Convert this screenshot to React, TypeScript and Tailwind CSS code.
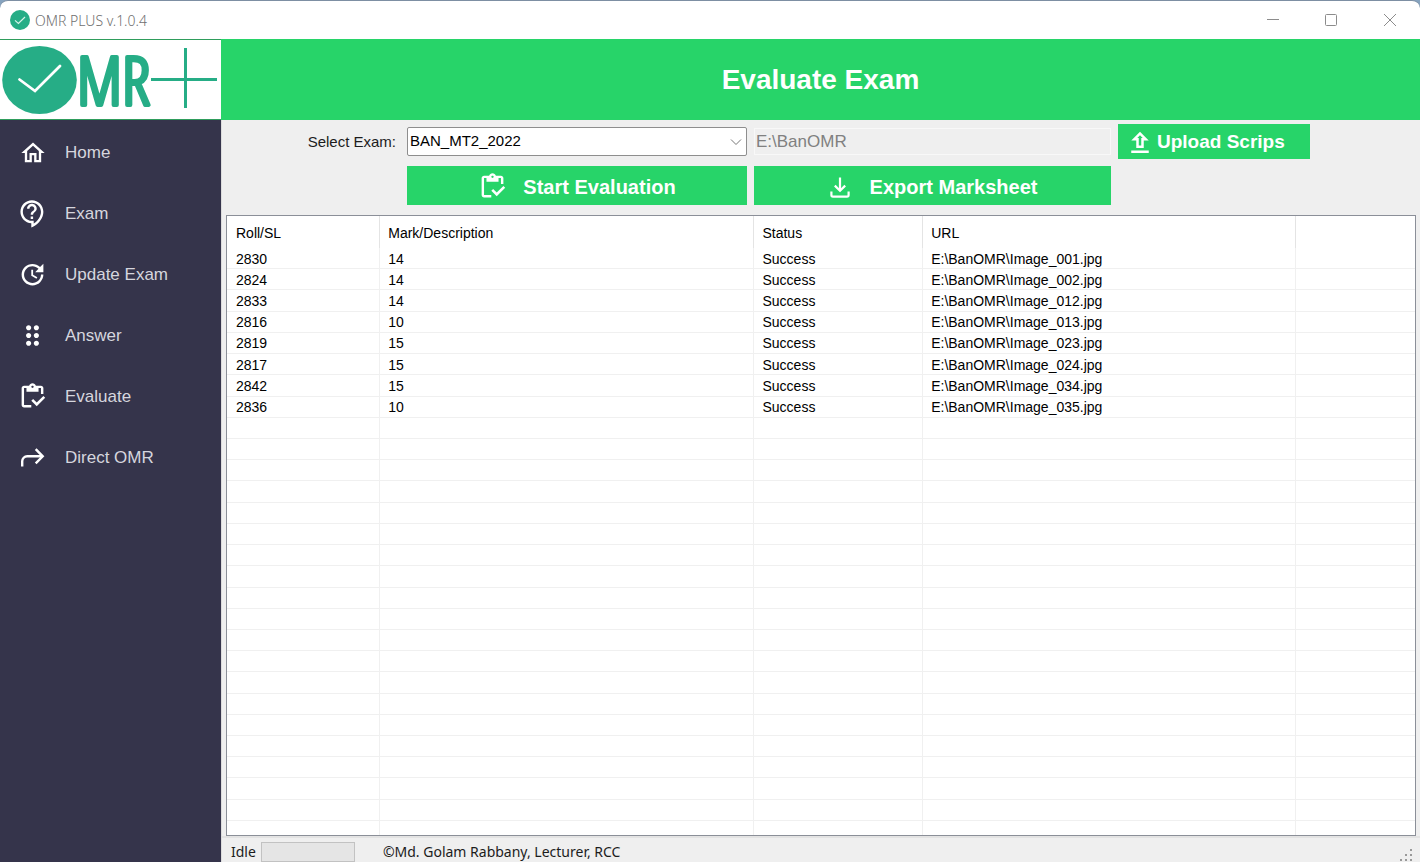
import type { ReactNode } from "react";
import {
  MdDragIndicator,
  MdOutlineContactSupport,
  MdOutlineHome,
  MdOutlineInventory,
  MdOutlineUpload,
  MdUpdate,
} from "react-icons/md";

function RedoArrow() {
  return (
    <svg viewBox="0 0 26 26" className="size-[26px]" fill="none" stroke="currentColor" strokeWidth="2.4" aria-hidden="true">
      <path d="M2.2 21.500v-5.2a5 5 0 0 1 5-5H22.500" />
      <path d="M15.700 4.2l7 7.1-7 7.1" />
    </svg>
  );
}

function TrayDown() {
  return (
    <svg viewBox="0 0 24 24" className="size-6" fill="none" stroke="currentColor" strokeWidth="2.2" aria-hidden="true">
      <path d="M12 2.5v13" />
      <path d="M6.8 10.6l5.2 5.2 5.2-5.2" />
      <path d="M3.4 16.5v3.6a1.6 1.6 0 0 0 1.6 1.6h14a1.6 1.6 0 0 0 1.6-1.6v-3.6" />
    </svg>
  );
}

const nav: { label: string; icon: ReactNode }[] = [
  { label: "Home", icon: <MdOutlineHome size={28} /> },
  { label: "Exam", icon: <MdOutlineContactSupport size={29} /> },
  { label: "Update Exam", icon: <MdUpdate size={29} /> },
  { label: "Answer", icon: <MdDragIndicator size={31} /> },
  { label: "Evaluate", icon: <MdOutlineInventory size={29} /> },
  { label: "Direct OMR", icon: <RedoArrow /> },
];

const rows: [string, string, string][] = [
  ["2830", "14", "001"],
  ["2824", "14", "002"],
  ["2833", "14", "012"],
  ["2816", "10", "013"],
  ["2819", "15", "023"],
  ["2817", "15", "024"],
  ["2842", "15", "034"],
  ["2836", "10", "035"],
];

const emptyRows = Array.from({ length: 19 }, (_, i) => i);

function TitleBar() {
  return (
    <header className="flex h-[39px] shrink-0 items-center rounded-t-lg border-t border-[#7d8fa3] bg-white pl-[10px] text-[#8c8c8c]">
      <svg viewBox="0 0 20 20" className="size-5" aria-hidden="true">
        <circle cx="10" cy="10" r="10" fill="#26ad86" />
        <path d="M5 10.4l3.4 3L15 7" fill="none" stroke="#d8f3ea" strokeWidth="1.2" />
      </svg>
      <span className="ml-[5px] font-['Noto_Sans',sans-serif] text-[14px] font-light text-[#707070]">OMR PLUS v.1.0.4</span>
      <div className="ml-auto flex h-full">
        <button aria-label="Minimize" className="grid w-[58px] place-items-center">
          <svg viewBox="0 0 12 12" className="size-3" stroke="currentColor" fill="none"><path d="M0 5.5h12" /></svg>
        </button>
        <button aria-label="Maximize" className="grid w-[58px] place-items-center">
          <svg viewBox="0 0 12 12" className="size-3" stroke="currentColor" fill="none"><rect x=".5" y=".5" width="11" height="11" rx="1" /></svg>
        </button>
        <button aria-label="Close" className="grid w-[60px] place-items-center">
          <svg viewBox="0 0 12 12" className="size-3" stroke="currentColor" fill="none"><path d="M0 0l12 12M12 0L0 12" /></svg>
        </button>
      </div>
    </header>
  );
}

function Logo() {
  return (
    <div className="flex h-[81px] items-center border-y border-[#2f9d5c] bg-white">
      <svg viewBox="0 0 221 79" className="w-full overflow-visible" role="img" aria-label="OMR+">
        <ellipse cx="39.5" cy="40" rx="37.3" ry="34" fill="#26ad86" />
        <path d="M19.5 39.5L35 51 60 26" fill="none" stroke="#fff" strokeWidth="2.8" strokeLinecap="round" />
        <text x="77" y="65" fill="#26ad86" stroke="#26ad86" strokeWidth="4" strokeLinejoin="round" className="font-['Open_Sans_Condensed_Light','Noto_Sans_ExtraCondensed_Light','Open_Sans_Condensed',sans-serif] text-[66px] font-light">MR</text>
        <path d="M151 39.5h66M185.500 8v60" fill="none" stroke="#26ad86" strokeWidth="3" />
      </svg>
    </div>
  );
}

function Sidebar() {
  return (
    <aside className="w-[221px] shrink-0 bg-[#35344b]">
      <Logo />
      <nav className="pt-[2px] font-['Liberation_Sans',sans-serif] text-[17px] text-[#d6d6de]">
        {nav.map((item) => (
          <a key={item.label} href="#" className="flex h-[61px] items-center">
            <span className="grid w-[65px] place-items-center text-white">{item.icon}</span>
            {item.label}
          </a>
        ))}
      </nav>
    </aside>
  );
}

const green = "flex items-center bg-[#27d469] pt-[2px] font-bold text-white";

function Toolbar() {
  return (
    <div className="grid grid-cols-[178fr_340fr_357fr_192fr_103fr] items-center gap-[7px] pt-1 pb-[10px]">
      <label htmlFor="exam" className="pt-[2px] pr-1 text-right text-[15px] text-[#1c1c1c]">Select Exam:</label>
      <div className="relative">
        <select id="exam" className="h-[29px] w-full appearance-none rounded-xs border border-[#8e8e8e] bg-white pl-[2px] text-[15px] text-black">
          <option>BAN_MT2_2022</option>
        </select>
        <svg viewBox="0 0 12 8" className="pointer-events-none absolute top-[11px] right-[5px] h-2 w-3" fill="none" stroke="#777" aria-hidden="true">
          <path d="M1 1.500l5 5 5-5" />
        </svg>
      </div>
      <input aria-label="Scripts folder" disabled defaultValue="E:\BanOMR" className="h-[27px] w-full min-w-0 border border-[#f8f8f8] bg-[#efefef] px-px text-[17px] text-[#808080]" />
      <button className={`${green} h-[35px] gap-[2px] pl-[7px] text-[19px]`}>
        <MdOutlineUpload size={30} />
        Upload Scrips
      </button>
      <button className={`${green} col-start-2 h-[39px] justify-center gap-4 text-[20px]`}>
        <MdOutlineInventory size={29} />
        Start Evaluation
      </button>
      <button className={`${green} h-[39px] justify-center gap-[18px] text-[20px]`}>
        <TrayDown />
        Export Marksheet
      </button>
    </div>
  );
}

function Results() {
  return (
    <div className="mr-1 ml-1 min-h-0 flex-1 overflow-hidden border border-[#8b8f98] bg-white">
      <table className="h-full w-full table-fixed border-separate border-spacing-0 text-left text-[14px] leading-4 text-black [&_td]:border-r [&_td]:border-b [&_td]:border-[#f0f0f0] [&_td]:pt-px [&_td]:pb-0 [&_td]:pl-2 [&_td:first-child]:pl-[9px] [&_td:last-child]:border-r-0 [&_th]:border-r [&_th]:border-[#e4e4e4] [&_th]:pt-px [&_th]:pl-2 [&_th]:font-normal [&_th:first-child]:pl-[9px] [&_th:last-child]:border-r-0">
        <colgroup>
          <col className="w-[12.9%]" />
          <col className="w-[31.5%]" />
          <col className="w-[14.2%]" />
          <col className="w-[31.4%]" />
          <col />
        </colgroup>
        <thead>
          <tr className="h-8">
            <th>Roll/SL</th>
            <th>Mark/Description</th>
            <th>Status</th>
            <th>URL</th>
            <th aria-label="Spacer" />
          </tr>
        </thead>
        <tbody>
          {rows.map(([roll, mark, image]) => (
            <tr key={roll}>
              <td>{roll}</td>
              <td>{mark}</td>
              <td>Success</td>
              <td>{`E:\\BanOMR\\Image_${image}.jpg`}</td>
              <td />
            </tr>
          ))}
          {emptyRows.map((i) => (
            <tr key={i}>
              <td>&nbsp;</td>
              <td />
              <td />
              <td />
              <td />
            </tr>
          ))}
        </tbody>
        <tfoot>
          <tr className="h-[14px] [&>td]:border-b-0">
            <td />
            <td />
            <td />
            <td />
            <td />
          </tr>
        </tfoot>
      </table>
    </div>
  );
}

function StatusBar() {
  return (
    <footer className="flex h-[26px] shrink-0 items-center border-t-2 border-[#e3e3e3] pt-[3px] pr-[6px] pl-[9px] font-['Noto_Sans',sans-serif] text-[14px] text-[#1c1c1c]">
      <span>Idle</span>
      <div role="progressbar" aria-label="Progress" className="ml-[5px] h-5 w-[94px] border border-[#c2c2c2] bg-[#e5e5e5]" />
      <span className="ml-7">©Md. Golam Rabbany, Lecturer, RCC</span>
      <svg viewBox="0 0 14 14" className="ml-auto size-[14px] self-end" fill="#999" aria-hidden="true">
        <path d="M10 1h2v2h-2zM5 6h2v2H5zM10 6h2v2h-2zM0 11h2v2H0zM5 11h2v2H5zM10 11h2v2h-2z" />
      </svg>
    </footer>
  );
}

export default function App() {
  return (
    <div className="flex h-screen flex-col bg-[#86a3bf]">
      <TitleBar />
      <div className="flex min-h-0 flex-1 bg-[#efefef]">
        <Sidebar />
        <main className="flex min-w-0 flex-1 flex-col border-l border-[#dcdcdc] font-['Liberation_Sans',sans-serif]">
          <div className="-ml-px flex h-[81px] shrink-0 items-center justify-center bg-[#27d469]">
            <h1 className="text-[28px] font-bold text-white">Evaluate Exam</h1>
          </div>
          <Toolbar />
          <Results />
          <StatusBar />
        </main>
      </div>
    </div>
  );
}
